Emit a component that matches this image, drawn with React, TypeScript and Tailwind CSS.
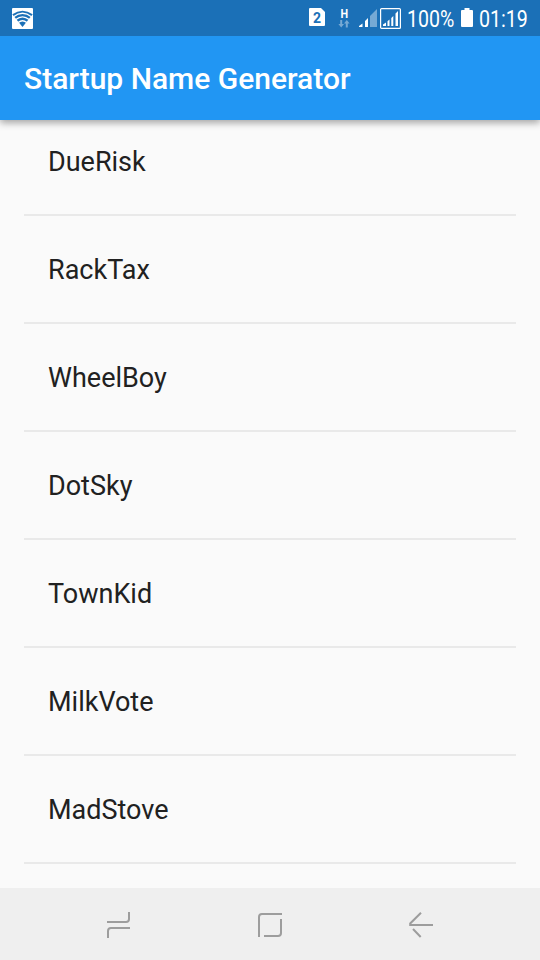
import React from "react";

const names: string[] = ["DueRisk", "RackTax", "WheelBoy", "DotSky", "TownKid", "MilkVote", "MadStove"];

function WifiIcon() {
  return (
    <svg className="ml-3 h-[21px] w-[21px] shrink-0" viewBox="0 0 21 21">
      <rect width="21" height="21" rx="1" fill="#fff" />
      <path d="M.3 6.3Q10.5-1 20.7 6.3L10.5 19Z" fill="#1b70b7" />
      <g fill="none" stroke="#fff" strokeWidth="1.3">
        <path d="M1.5 8.7Q10.5 1.8 19.5 8.7" />
        <path d="M3.8 11.6Q10.5 6.1 17.2 11.6" />
        <path d="M6.2 14.6Q10.5 10.8 14.8 14.6" />
      </g>
    </svg>
  );
}

function SimIcon() {
  return (
    <div className="relative mt-[-2px] h-[18px] w-4 shrink-0">
      <svg className="block h-[18px] w-4" viewBox="0 0 16 18">
        <path d="M1 0H12L16 4V17Q16 18 15 18H1Q0 18 0 17V1Q0 0 1 0Z" fill="#fff" />
      </svg>
      <span className="absolute inset-0 text-center text-[14px] leading-[21px] font-bold text-[#1b70b7]">2</span>
    </div>
  );
}

function DataIcon() {
  return (
    <div className="ml-[13px] flex h-[18px] w-3 shrink-0 flex-col items-center">
      <span className="h-[11px] scale-x-90 text-[12px] leading-[11px] font-bold">H</span>
      <svg className="h-2 w-3 shrink-0" viewBox="0 0 12 8">
        <path d="M2.2 0H4.2V4H6L3.2 7.5L.4 4H2.2ZM7.8 7.5H9.8V3.5H11.6L8.8 0L6 3.5H7.8Z" fill="#76a9d4" />
      </svg>
    </div>
  );
}

function SignalIcon() {
  return (
    <svg className="ml-[9px] h-[18px] w-[18px] shrink-0" viewBox="0 0 18 18">
      <path d="M11 7L18 0V18H11Z" fill="#76a9d4" />
      <path d="M0 18V17L3.5 14.5V18ZM6 18V12L9 9V18Z" fill="#fff" />
    </svg>
  );
}

function BoxedSignalIcon() {
  return (
    <svg className="ml-[3px] h-[21px] w-[21px] shrink-0" viewBox="0 0 21 21">
      <rect x=".6" y=".6" width="19.8" height="19.8" rx="1" fill="none" stroke="#fff" strokeWidth="1.2" />
      <path d="M3 18V16.5L6 14.5V18ZM7.5 18V13.3L9.5 11.5V18ZM11.3 18V10L13.3 8V18ZM15.5 18V5.5L18 3V18Z" fill="#fff" />
    </svg>
  );
}

function StatusBar() {
  return (
    <div className="flex h-9 items-center bg-[#1b70b7] text-white">
      <WifiIcon />
      <div className="ml-[276px] flex items-center">
        <SimIcon />
        <DataIcon />
        <SignalIcon />
        <BoxedSignalIcon />
      </div>
      <div className="ml-[6px] w-[47px] shrink-0 text-[23.5px] leading-9">
        <span className="inline-block origin-left translate-y-px scale-x-[.83] whitespace-nowrap">100%</span>
      </div>
      <svg className="mb-[2px] ml-[7px] h-[19px] w-3 shrink-0" viewBox="0 0 12 19">
        <path d="M3.5 0H8.5V2H11Q12 2 12 3V18Q12 19 11 19H1Q0 19 0 18V3Q0 2 1 2H3.5Z" fill="#fff" />
      </svg>
      <div className="ml-[6px] w-[49px] shrink-0 text-[23.5px] leading-9">
        <span className="inline-block origin-left translate-y-px scale-x-[.835] whitespace-nowrap">01:19</span>
      </div>
    </div>
  );
}

function NavigationBar() {
  return (
    <nav className="flex h-[72px] shrink-0 items-start bg-[#efefef] pt-6 pl-[106px]">
      <svg className="h-[27px] w-[25px]" viewBox="0 0 25 27" fill="none" stroke="#9d9d9d" strokeWidth="2">
        <path d="M1 10H20Q23 10 23 7V0M24 16H5Q2 16 2 19V26" />
      </svg>
      <svg className="ml-[126px] h-[26px] w-[26px]" viewBox="0 0 26 26" fill="none" stroke="#9d9d9d" strokeWidth="2">
        <path d="M2 25V5Q2 2 5 2H25M24 7V21Q24 24 21 24H7" />
      </svg>
      <svg className="ml-[126px] h-[27px] w-[25px]" viewBox="0 0 25 27" fill="none" stroke="#9d9d9d" strokeWidth="2">
        <path d="M12 .7L1.2 11.5V13H24M4 17L11.7 25" />
      </svg>
    </nav>
  );
}

export default function App() {
  return (
    <div className="flex h-[960px] w-[540px] flex-col overflow-hidden bg-[#fafafa] font-['Roboto',sans-serif]">
      <header className="z-10 shrink-0 shadow-[0_3px_7px_rgba(0,0,0,0.34)]">
        <StatusBar />
        <div className="flex h-21 items-center bg-[#2196f3] px-6 pt-[2px]">
          <h1 className="text-[30px] leading-9 font-medium text-white">Startup Name Generator</h1>
        </div>
      </header>
      <main className="min-h-0 flex-1 overflow-hidden px-6">
        <ul className="-mt-[12px]">
          {names.map((name) => (
            <li key={name} className="flex h-[108px] items-center border-b-2 border-[#e9e9e9] px-6 pt-[2px] text-[27px] text-[#212121]">
              {name}
            </li>
          ))}
        </ul>
      </main>
      <NavigationBar />
    </div>
  );
}
